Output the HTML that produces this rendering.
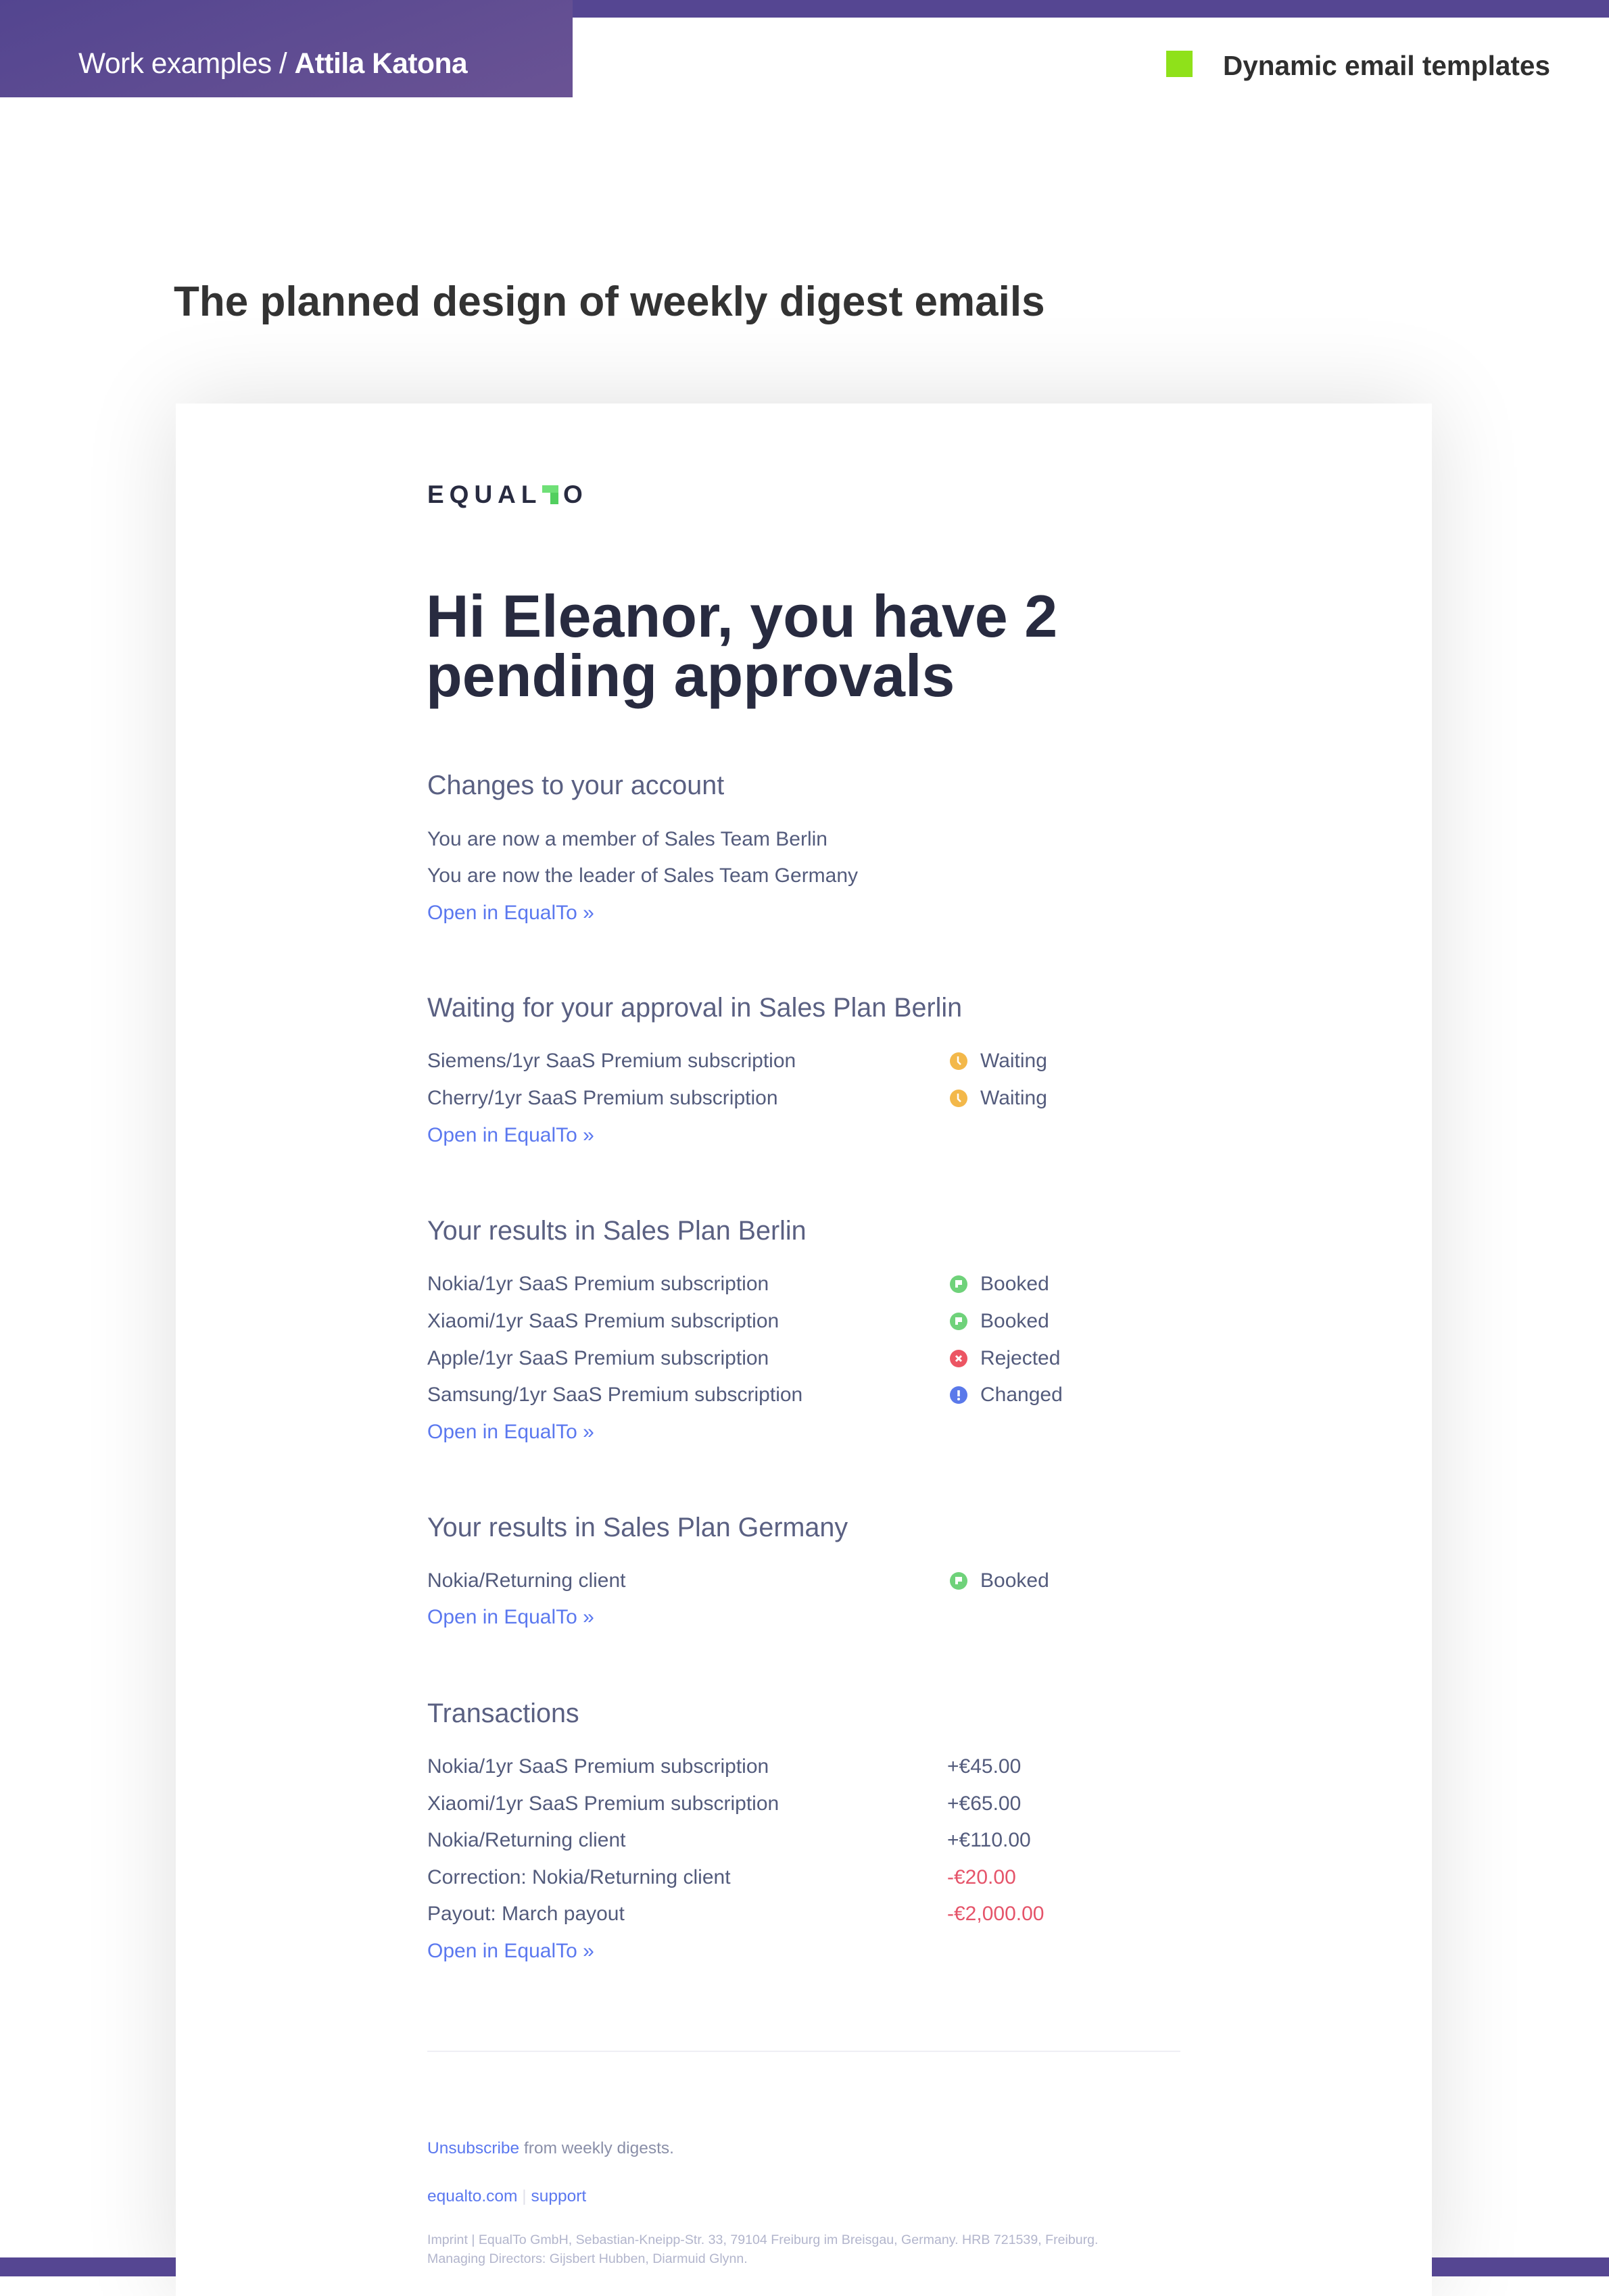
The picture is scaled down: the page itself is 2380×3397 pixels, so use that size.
<!DOCTYPE html>
<html><head><meta charset="utf-8"><style>
*{margin:0;padding:0;box-sizing:border-box}
body{width:2380px;height:3368px;position:relative;overflow:hidden;background:#fff;font-family:"Liberation Sans",Arial,sans-serif}
.a{position:absolute;white-space:nowrap}
.r{height:60px;line-height:60px;font-size:30px;color:#535b7c}
.h{height:60px;line-height:60px;font-size:39.5px;color:#5a6082}
.l{color:#5b78ef}
</style></head><body>
<div class="a" style="left:0;top:0;width:2380px;height:26px;background:#554692"></div>
<div class="a" style="left:0;top:0;width:847px;height:144px;background:linear-gradient(160deg,#534590,#6a5394)"></div>
<div class="a" style="left:116px;top:70px;line-height:50px;font-size:42.5px;color:#fff;letter-spacing:-0.5px">Work examples / <b>Attila Katona</b></div>
<div class="a" style="left:1725px;top:75px;width:39px;height:39px;background:#8fe11a"></div>
<div class="a" style="left:1809px;top:72px;line-height:50px;font-size:40.5px;font-weight:bold;color:#2f2f2f">Dynamic email templates</div>
<div class="a" style="left:257px;top:410px;line-height:74px;font-size:62px;font-weight:bold;color:#333">The planned design of weekly digest emails</div>

<div class="a" style="left:260px;top:597px;width:1858px;height:2800px;background:#fff;box-shadow:0 0 140px rgba(0,0,0,0.13)"></div>
<div class="a" style="left:0;top:3340px;width:260px;height:28px;background:#554692"></div>
<div class="a" style="left:2118px;top:3340px;width:262px;height:28px;background:#554692"></div>

<div class="a" style="left:632px;top:712px;line-height:40px;font-size:37px;font-weight:bold;color:#282b40;letter-spacing:8px">EQUAL</div>
<svg class="a" style="left:802px;top:718px" width="24" height="28"><rect x="0" y="0" width="24" height="11" fill="#6fe077"/><rect x="12" y="11" width="12" height="17" fill="#52cf5f"/></svg>
<div class="a" style="left:833px;top:712px;line-height:40px;font-size:37px;font-weight:bold;color:#282b40">O</div>

<div class="a" style="left:630px;top:868px;line-height:88px;font-size:88px;font-weight:bold;color:#282b40">Hi Eleanor, you have 2<br>pending approvals</div>

<div class="a h" style="left:632px;top:1132px">Changes to your account</div>
<div class="a r" style="left:632px;top:1212px">You are now a member of Sales Team Berlin</div>
<div class="a r" style="left:632px;top:1266px">You are now the leader of Sales Team Germany</div>
<div class="a r l" style="left:632px;top:1321px">Open in EqualTo »</div>

<div class="a h" style="left:632px;top:1461px">Waiting for your approval in Sales Plan Berlin</div>
<div class="a r" style="left:632px;top:1540px">Siemens/1yr SaaS Premium subscription</div>
<div class="a r" style="left:632px;top:1595px">Cherry/1yr SaaS Premium subscription</div>
<div class="a r l" style="left:632px;top:1650px">Open in EqualTo »</div>
<svg class="a" style="left:1405px;top:1557px" width="26" height="26"><circle cx="13" cy="13" r="13" fill="#f3b84a"/><path d="M12 6v8l4 4" stroke="#fff" stroke-width="2.5" fill="none"/></svg>
<svg class="a" style="left:1405px;top:1612px" width="26" height="26"><circle cx="13" cy="13" r="13" fill="#f3b84a"/><path d="M12 6v8l4 4" stroke="#fff" stroke-width="2.5" fill="none"/></svg>
<div class="a r" style="left:1450px;top:1540px">Waiting</div>
<div class="a r" style="left:1450px;top:1595px">Waiting</div>

<div class="a h" style="left:632px;top:1791px">Your results in Sales Plan Berlin</div>
<div class="a r" style="left:632px;top:1870px">Nokia/1yr SaaS Premium subscription</div>
<div class="a r" style="left:632px;top:1925px">Xiaomi/1yr SaaS Premium subscription</div>
<div class="a r" style="left:632px;top:1980px">Apple/1yr SaaS Premium subscription</div>
<div class="a r" style="left:632px;top:2034px">Samsung/1yr SaaS Premium subscription</div>
<div class="a r l" style="left:632px;top:2089px">Open in EqualTo »</div>
<svg class="a" style="left:1405px;top:1887px" width="26" height="26"><circle cx="13" cy="13" r="13" fill="#6fd27a"/><path d="M8 7h10v7h-6v4h-4z" fill="#fff"/></svg>
<svg class="a" style="left:1405px;top:1942px" width="26" height="26"><circle cx="13" cy="13" r="13" fill="#6fd27a"/><path d="M8 7h10v7h-6v4h-4z" fill="#fff"/></svg>
<svg class="a" style="left:1405px;top:1997px" width="26" height="26"><circle cx="13" cy="13" r="13" fill="#ec5563"/><path d="M9 9l8 8M17 9l-8 8" stroke="#fff" stroke-width="3"/></svg>
<svg class="a" style="left:1405px;top:2051px" width="26" height="26"><circle cx="13" cy="13" r="13" fill="#5a79ea"/><path d="M13 6v9" stroke="#fff" stroke-width="3.5"/><circle cx="13" cy="19" r="2" fill="#fff"/></svg>
<div class="a r" style="left:1450px;top:1870px">Booked</div>
<div class="a r" style="left:1450px;top:1925px">Booked</div>
<div class="a r" style="left:1450px;top:1980px">Rejected</div>
<div class="a r" style="left:1450px;top:2034px">Changed</div>

<div class="a h" style="left:632px;top:2230px">Your results in Sales Plan Germany</div>
<div class="a r" style="left:632px;top:2309px">Nokia/Returning client</div>
<div class="a r l" style="left:632px;top:2363px">Open in EqualTo »</div>
<svg class="a" style="left:1405px;top:2326px" width="26" height="26"><circle cx="13" cy="13" r="13" fill="#6fd27a"/><path d="M8 7h10v7h-6v4h-4z" fill="#fff"/></svg>
<div class="a r" style="left:1450px;top:2309px">Booked</div>

<div class="a h" style="left:632px;top:2505px">Transactions</div>
<div class="a r" style="left:632px;top:2584px">Nokia/1yr SaaS Premium subscription</div>
<div class="a r" style="left:632px;top:2639px">Xiaomi/1yr SaaS Premium subscription</div>
<div class="a r" style="left:632px;top:2693px">Nokia/Returning client</div>
<div class="a r" style="left:632px;top:2748px">Correction: Nokia/Returning client</div>
<div class="a r" style="left:632px;top:2802px">Payout: March payout</div>
<div class="a r l" style="left:632px;top:2857px">Open in EqualTo »</div>
<div class="a r" style="left:1401px;top:2584px">+€45.00</div>
<div class="a r" style="left:1401px;top:2639px">+€65.00</div>
<div class="a r" style="left:1401px;top:2693px">+€110.00</div>
<div class="a r" style="left:1401px;top:2748px;color:#e5546a">-€20.00</div>
<div class="a r" style="left:1401px;top:2802px;color:#e5546a">-€2,000.00</div>

<div class="a" style="left:632px;top:3034px;width:1114px;height:2px;background:#efeff5"></div>
<div class="a" style="left:632px;top:3164px;line-height:30px;font-size:24.5px;color:#8a8fa8"><span class="l">Unsubscribe</span> from weekly digests.</div>
<div class="a" style="left:632px;top:3235px;line-height:30px;font-size:24.5px;color:#5b78ef">equalto.com <span style="color:#e0e0ea">|</span> support</div>
<div class="a" style="left:632px;top:3300px;line-height:28px;font-size:19.6px;color:#b2b5cc">Imprint | EqualTo GmbH, Sebastian-Kneipp-Str. 33, 79104 Freiburg im Breisgau, Germany. HRB 721539, Freiburg.<br>Managing Directors: Gijsbert Hubben, Diarmuid Glynn.</div>
</body></html>
